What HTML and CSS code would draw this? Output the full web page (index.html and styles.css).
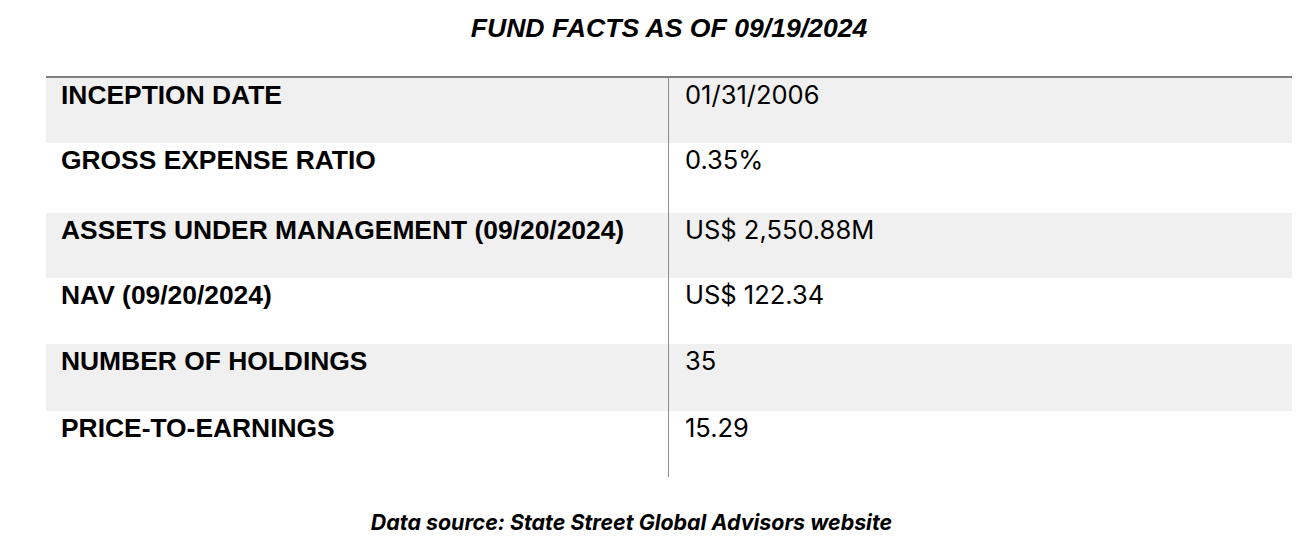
FILE: index.html
```html
<!DOCTYPE html>
<html>
<head>
<meta charset="utf-8">
<link rel="stylesheet" href="styles.css">
</head>
<body>
<div class="page">
  <h1 class="title">FUND FACTS AS OF 09/19/2024</h1>
  <div class="facts">
    <div class="row shade"><div class="label">INCEPTION DATE</div><div class="value">01/31/2006</div></div>
    <div class="row r2"><div class="label">GROSS EXPENSE RATIO</div><div class="value">0.35%</div></div>
    <div class="row shade r3"><div class="label">ASSETS UNDER MANAGEMENT (09/20/2024)</div><div class="value">US$ 2,550.88M</div></div>
    <div class="row r4"><div class="label">NAV (09/20/2024)</div><div class="value">US$ 122.34</div></div>
    <div class="row shade r5"><div class="label">NUMBER OF HOLDINGS</div><div class="value">35</div></div>
    <div class="row r6"><div class="label">PRICE-TO-EARNINGS</div><div class="value">15.29</div></div>
  </div>
  <p class="source">Data source: State Street Global Advisors website</p>
</div>
</body>
</html>
```
FILE: styles.css
```css
html, body {
  margin: 0;
  padding: 0;
  background: #ffffff;
}
.page {
  width: 1246px;
  margin-left: 46px;
  padding-top: 12px;
  color: #000;
}
.title {
  margin: 0;
  font-family: "Liberation Sans", Arial, sans-serif;
  font-weight: bold;
  font-style: italic;
  font-size: 26.6px;
  line-height: 30px;
  text-align: center;
  height: 30px;
  margin-bottom: 33px;
  padding-top: 1px;
}
.facts {
  border-top: 2px solid #808080;
  display: flex;
  flex-direction: column;
}
.row {
  display: grid;
  grid-template-columns: 622px 1fr;
  height: 65px;
}
.row.r2 { height: 70px; }
.row.r3 { height: 65px; }
.row.r4 { height: 66px; }
.row.r5 { height: 67px; }
.row.r6 { height: 66px; }
.shade {
  background: #f0f0f0;
}
.label {
  padding: 2px 0 0 15px;
  font-family: "Liberation Sans", Arial, sans-serif;
  font-weight: bold;
  font-size: 26.4px;
  line-height: 30px;
  white-space: nowrap;
}
.value {
  border-left: 1px solid #8c8c8c;
  padding: 2px 0 0 16px;
  font-family: Inter, "Liberation Sans", sans-serif;
  font-size: 25.5px;
  line-height: 30px;
  white-space: nowrap;
}
.source {
  margin: 32px 0 0 0;
  padding-right: 75px;
  text-align: center;
  font-family: Inter, "Liberation Sans", sans-serif;
  font-weight: bold;
  font-style: italic;
  font-size: 21.4px;
  line-height: 26px;
}
```
